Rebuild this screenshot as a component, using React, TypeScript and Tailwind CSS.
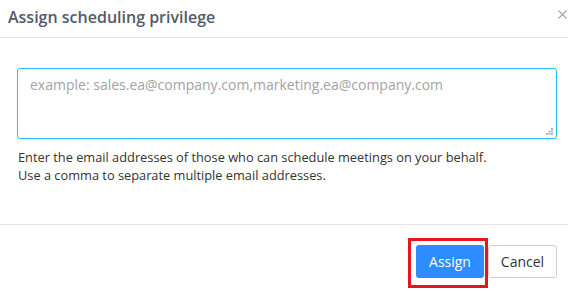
import React from 'react';

const font = { fontFamily: '"Open Sans", "Liberation Sans", sans-serif' };

export default function App() {
  return (
    <div className="relative w-[568px] h-[291px] bg-white overflow-hidden" style={font}>
      <div className="flex justify-between h-[38px] border-b border-[#e3e3e3] pl-[8px]">
        <h2 className="pt-[3px] text-[16px] leading-[28px] font-semibold text-[#545a69]">
          Assign scheduling privilege
        </h2>
        <button className="pt-[10px] pr-[1px] h-fit" aria-label="Close">
          <svg width="9" height="9" viewBox="0 0 9 9">
            <path d="M0.5 0.5 L8.5 8.5 M8.5 0.5 L0.5 8.5" stroke="#a7aab6" strokeWidth="1.3" />
          </svg>
        </button>
      </div>

      <div className="h-[187px] border-b border-[#e3e3e3] px-[17px] pt-[30px]">
        <div className="relative w-[540px] h-[71px]">
          <textarea
            className="w-full h-full resize-none rounded-[3px] border border-[#22bff4] px-[12px] py-[6px] text-[14px] leading-[20px] text-[#333] placeholder:text-[#a3a3a3] outline-none"
            placeholder="example: sales.ea@company.com,marketing.ea@company.com"
          />
          <svg className="absolute right-[4px] bottom-[4px]" width="7" height="7" viewBox="0 0 7 7">
            <rect x="5" y="0" width="2" height="2" fill="#b5b5b5" />
            <rect x="2.5" y="2.5" width="2" height="2" fill="#b5b5b5" />
            <rect x="5" y="2.5" width="2" height="2" fill="#b5b5b5" />
            <rect x="0" y="5" width="2" height="2" fill="#b5b5b5" />
            <rect x="2.5" y="5" width="2" height="2" fill="#b5b5b5" />
            <rect x="5" y="5" width="2" height="2" fill="#b5b5b5" />
          </svg>
        </div>
        <p className="mt-[10px] pl-[1px] text-[12.8px] leading-[17.5px] text-[#333]">
          Enter the email addresses of those who can schedule meetings on your behalf.
          <br />
          Use a comma to separate multiple email addresses.
        </p>
      </div>

      <div className="flex justify-end gap-[4px] pt-[20px] pr-[11px]">
        <button className="w-[68px] h-[33px] rounded-[3px] bg-[#2d8cff] text-white text-[14px]">
          Assign
        </button>
        <button className="w-[69px] h-[33px] rounded-[3px] border border-[#cfcfcf] bg-white text-[#333] text-[14px]">
          Cancel
        </button>
      </div>

      <div className="absolute left-[408px] top-[238px] w-[80px] h-[50px] border-[3px] border-[#e5161f] pointer-events-none" />
    </div>
  );
}
